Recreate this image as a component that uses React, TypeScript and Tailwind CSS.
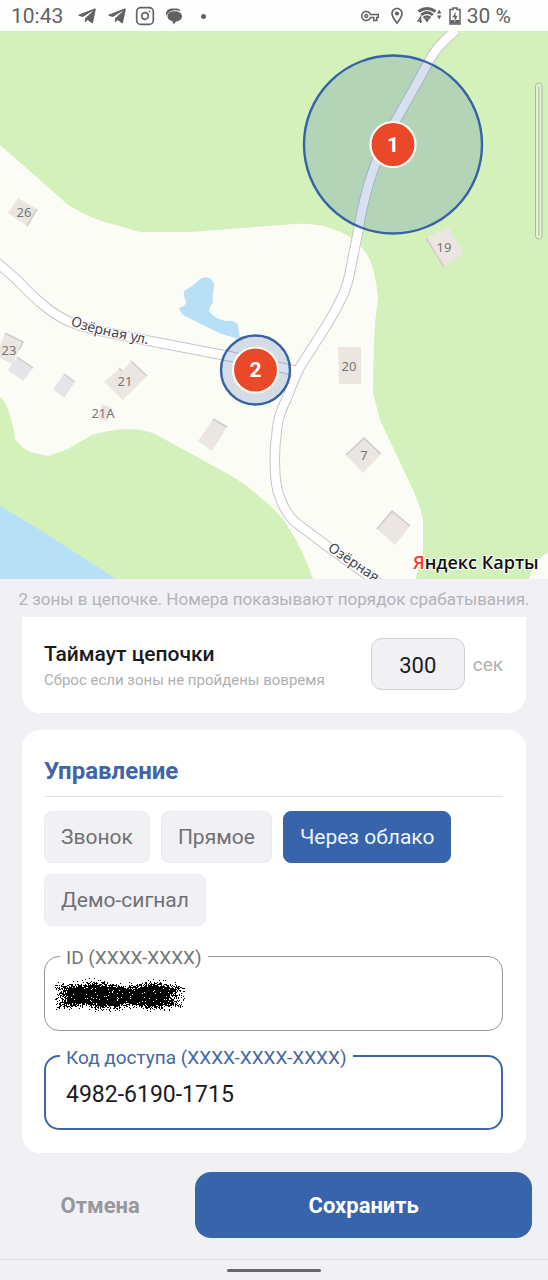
import { useState, type ReactNode } from "react";
import { Instagram } from "lucide-react";
import { FaTelegramPlane } from "react-icons/fa";
import { MdOutlineVpnKey, MdOutlineLocationOn } from "react-icons/md";

function StatusBar() {
  return (
    <header className="flex h-[31px] items-center justify-between bg-[#fefefe] pt-px pr-[37px] pl-[11px] text-[21px] leading-6 text-[#626262]">
      <div className="flex items-center">
        <span>10:43</span>
        <FaTelegramPlane className="ml-3.5 size-5" />
        <FaTelegramPlane className="ml-2.5 size-5" />
        <Instagram className="ml-2 size-5" strokeWidth={2} />
        <svg viewBox="0 0 18 18" className="ml-2.5 size-[18px]" fill="currentColor">
          <path d="M2.500 9.500C2.500 6 5.500 4.200 9.500 4.200C14 4.200 17 6.200 17 9.300C17 12.500 14 14.200 11.200 14.500L8.500 17.500L7.600 14.300C4.500 13.600 2.500 12 2.500 9.500Z" />
          <path d="M1.300 9C0 4.500 3 1.500 7 1.500H12C13.800 1.500 15 2.400 15.500 3.900C10 2.300 4 3 1.300 9Z" />
        </svg>
        <span className="ml-[18px] size-[5px] rounded-full bg-current" />
      </div>
      <div className="flex items-center">
        <MdOutlineVpnKey className="size-[18px]" />
        <MdOutlineLocationOn className="ml-2 size-5" />
        <svg viewBox="0 0 26 20" className="ml-2.5 h-5 w-[26px]" fill="none" stroke="currentColor">
          <path d="M1.500 5.500Q10 -0.500 18.500 5.500" strokeWidth="3" />
          <path d="M4.200 9Q10 4.200 15.800 9" strokeWidth="2.900" />
          <path d="M6.500 12Q10 8.800 13.500 12" strokeWidth="2.400" />
          <path d="M7.500 13Q10 11 12.500 13L10 16.500Z" fill="currentColor" stroke="none" />
          <path d="M3.600 17V11L1 15.200H5.200" strokeWidth="1.300" />
          <path d="M20 7.500L22.200 3.500L24.400 7.500ZM20 9.500L22.200 13.500L24.400 9.500Z" fill="currentColor" stroke="none" />
        </svg>
        <svg viewBox="0 0 12 18" className="ml-1.5 h-[18px] w-3" fill="none" stroke="currentColor">
          <path d="M4 1H8V2.500H11V17H1V2.500H4Z" strokeWidth="1.500" />
          <path d="M1.500 13H10.500V16.500H1.500Z" fill="currentColor" stroke="none" />
          <path d="M6.800 4.500L3 10.500H5.500V15L9 8.800H6.800Z" fill="currentColor" stroke="#fefefe" strokeWidth="0.400" />
        </svg>
        <span className="ml-1.5">30 %</span>
      </div>
    </header>
  );
}

const ROAD_MAIN =
  "M456 30Q438 46 434 53C428 62 422 74 417 83L396 120Q385 138 377 160Q370 178 367 190Q361 212 359 227L352 262Q348 285 343 295C337 308 333 315 328 323L300 367Q292 384 287 398Q278 415 277 430Q274 450 275 467Q275 485 280 498Q286 514 295 522L327 546L385 588";
const ROAD_SIDE = "M-4 262Q12 275 20 283Q34 298 47 308Q57 316 70 322Q84 328 110 333L150 341L233 357L297 371";

const BUILDINGS = [
  "18,198 37,209 27,226 8,213",
  "426,238 448,227 464,253 444,267",
  "5,333 23,342 12,364 -4,356",
  "131,361 147,376 123,400 104,382 120,368 123,371",
  "102,404 112,408 107,422 98,418",
  "213,419 227,427 212,451 198,441",
  "338,347 361,347 361,384 339,384",
  "364,438 381,454 363,473 346,455",
  "392,511 410,526 395,545 377,529",
];

const SHEDS = ["17,357 33,368 23,381 8,370", "64,374 75,382 64,398 53,389"];

const SHADES = [
  "M37 209L27 226",
  "M426 238L444 267",
  "M5 333L23 342L19 350",
  "M17 357L33 368",
  "M64 374L75 382",
  "M131 361L147 376M119 368L122 371",
  "M213 419L227 427",
  "M346 455L364 438L381 454",
  "M377 529L392 511L410 526",
];

const HOUSE_NUMBERS = [
  { x: 24, y: 217, label: "26" },
  { x: 444, y: 252, label: "19" },
  { x: 9, y: 355, label: "23" },
  { x: 125, y: 386, label: "21" },
  { x: 103, y: 418, label: "21А" },
  { x: 349, y: 371, label: "20" },
  { x: 364, y: 460, label: "7" },
];

const ZONES = [
  { x: 393, y: 144.5, r: 89, label: "1" },
  { x: 255.5, y: 370, r: 34.5, label: "2" },
];

function ZoneMap() {
  return (
    <svg viewBox="0 31 548 548" className="block w-full" role="img" aria-label="Карта зон">
      <defs>
        <path id="street-a" d="M70 325Q90 333 113 337L160 347" />
        <path id="street-b" d="M327 550L392 594" />
      </defs>
      <rect y="31" width="548" height="548" fill="#fcfcf6" />
      <path
        fill="#d4f1bb"
        d="M0 31H548V552Q534 560 529 579H416Q419 564 423 552V520Q420 505 413 490L380 420L373 393L374 340Q375 318 378 298Q376 276 370 260C362 244 350 236 341 232Q318 222 294 224L190 232H140L98 220Q80 213 67 204L0 145Z"
      />
      <path
        fill="#d4f1bb"
        d="M0 397Q5 401 7 407Q13 420 15 439Q22 448 30 452L48 456L68 449L92 435Q108 430 127 429Q143 429 155 434L230 475Q248 486 260 497Q282 515 288 527Q303 549 313 579H0Z"
      />
      <path fill="#b7dff5" d="M0 506L37 528L116 579H0Z" />
      <path
        fill="#b7dff5"
        d="M200 279Q205 276 209 278Q215 281 214 288Q212 296 213 302Q209 308 209 311Q215 319 226 321Q235 320 238 325L240 339Q225 336 213 330L187 317Q181 315 179 308Q186 306 186 302Q183 295 184 291Q195 285 200 279Z"
      />
      <g fill="none" stroke="#c6c6cb" strokeWidth="10.500">
        <path d={ROAD_MAIN} />
        <path d={ROAD_SIDE} />
      </g>
      <g fill="none" stroke="#ffffff" strokeWidth="8.500">
        <path d={ROAD_MAIN} />
        <path d={ROAD_SIDE} />
      </g>
      {BUILDINGS.map((points) => (
        <polygon key={points} points={points} fill="#ebe6e1" />
      ))}
      {SHEDS.map((points) => (
        <polygon key={points} points={points} fill="#e5e4e8" />
      ))}
      {SHADES.map((d) => (
        <path key={d} d={d} fill="none" stroke="#d0cbc8" strokeWidth="1.500" />
      ))}
      <g fill="#777777" fontFamily="'Noto Sans', sans-serif" fontSize="13" textAnchor="middle">
        {HOUSE_NUMBERS.map((n) => (
          <text key={n.label} x={n.x} y={n.y}>
            {n.label}
          </text>
        ))}
      </g>
      <g
        fill="#44444b"
        fontFamily="'Noto Sans', sans-serif"
        fontSize="14"
        stroke="#ffffff"
        strokeWidth="2"
        paintOrder="stroke"
      >
        <text>
          <textPath href="#street-a">Озёрная ул.</textPath>
        </text>
        <text>
          <textPath href="#street-b">Озёрная</textPath>
        </text>
      </g>
      {ZONES.map((z) => (
        <g key={z.label}>
          <circle cx={z.x} cy={z.y} r={z.r} fill="#3763ac" fillOpacity="0.2" stroke="#3763a6" strokeWidth="2.400" />
          <circle cx={z.x} cy={z.y} r="22.500" fill="#e94829" stroke="#fffaf0" strokeWidth="2.200" />
          <text
            x={z.x}
            y={z.y + 7}
            fill="#ffffff"
            fontFamily="'Roboto', sans-serif"
            fontSize="21"
            fontWeight="700"
            textAnchor="middle"
          >
            {z.label}
          </text>
        </g>
      ))}
      <rect x="535.500" y="83" width="6.500" height="156" rx="3.200" fill="#e3f3d5" stroke="#a9bb9b" />
      <rect x="538" y="86" width="1.500" height="150" rx="0.700" fill="#b8caa9" />
      <text
        x="413"
        y="569"
        fill="#111111"
        fontFamily="'Open Sans', sans-serif"
        fontSize="18"
        fontWeight="600"
        stroke="#ffffff"
        strokeWidth="2"
        paintOrder="stroke"
      >
        <tspan fill="#f33b2f">Я</tspan>ндекс Карты
      </text>
    </svg>
  );
}

/* Speckled ink over a hidden value; the seed keeps it the same on each render. */
function inkPath() {
  let seed = 20417;
  const next = () => {
    seed = (seed * 1103515245 + 12345) % 2147483648;
    return seed / 2147483648;
  };
  let d = "";
  for (let y = 0; y < 34; y++) {
    for (let x = 0; x < 130; x++) {
      const top = 7 + 2 * Math.sin(x / 9) + (x < 40 ? -1 : 0);
      const bottom = 28 + 1.5 * Math.cos(x / 8);
      const edge = Math.min((x - 1) / 2.6, (126 - x) / 2.6, y - top + 2, bottom - y + 2);
      const chance = edge < -3 ? 0 : edge < 0 ? 0.08 : Math.min(0.96, 0.2 + edge * 0.15);
      if (next() < chance) d += `M${x} ${y}h1v1h-1z`;
    }
  }
  return d;
}
const INK = inkPath();

type FieldProps = {
  id: string;
  label: string;
  value: string;
  onChange: (value: string) => void;
  active?: boolean;
  children?: ReactNode;
};

function OutlinedField({ id, label, value, onChange, active = false, children }: FieldProps) {
  return (
    <fieldset
      className={
        active
          ? "relative min-w-0 rounded-[15px] border-2 border-[#3f65a8] px-3.5 pb-3 text-[#4468a6]"
          : "relative min-w-0 rounded-[15px] border border-[#949494] px-[15px] pb-3.5 text-[#757575]"
      }
    >
      <legend className="px-1.5 pt-1 text-[19px] leading-5">
        <label htmlFor={id}>{label}</label>
      </legend>
      <input
        id={id}
        value={value}
        onChange={(e) => onChange(e.target.value)}
        className="block h-12 w-full bg-transparent px-1.5 pt-1 text-[23px] text-[#1b1b1d] outline-none"
      />
      {children}
    </fieldset>
  );
}

const MODES = ["Звонок", "Прямое", "Через облако", "Демо-сигнал"];

export default function App() {
  const [timeout, setTimeoutValue] = useState("300");
  const [mode, setMode] = useState("Через облако");
  const [deviceId, setDeviceId] = useState("");
  const [code, setCode] = useState("4982-6190-1715");

  return (
    <div className="flex min-h-screen flex-col bg-[#f1f0f5] font-['Roboto',sans-serif]">
      <StatusBar />
      <ZoneMap />
      <p className="pt-[9px] pb-[7px] text-center text-[17px] leading-[22px] whitespace-nowrap text-[#b3b3b7]">
        2 зоны в цепочке. Номера показывают порядок срабатывания.
      </p>

      <main className="flex flex-col gap-[17px] px-[22px]">
        <section className="flex items-center justify-between rounded-b-[18px] bg-white pt-[21px] pr-[23px] pb-[23px] pl-[22px]">
          <div className="pt-0.5">
            <label htmlFor="timeout" className="block text-[21px] leading-7 font-medium text-[#1b1b1d]">
              Таймаут цепочки
            </label>
            <p className="mt-0.5 text-[15px] leading-5 text-[#b0b0b0]">Сброс если зоны не пройдены вовремя</p>
          </div>
          <div className="flex items-center gap-2">
            <input
              id="timeout"
              value={timeout}
              onChange={(e) => setTimeoutValue(e.target.value)}
              className="h-[52px] w-[94px] rounded-[11px] border border-[#d0d0d3] bg-[#f1f0f5] pt-0.5 text-center text-[22px] text-[#1b1b1d] outline-none"
            />
            <span className="pt-0.5 text-[19px] text-[#b0b0b0]">сек</span>
          </div>
        </section>

        <section className="rounded-[18px] bg-white pt-[27px] pr-[23px] pb-[23px] pl-[22px]">
          <h2 className="border-b border-[#e2e2e4] pb-[11px] text-2xl leading-7 font-bold text-[#3f65a8]">
            Управление
          </h2>
          <div className="mt-3.5 flex flex-wrap gap-[11px]">
            {MODES.map((name) => (
              <button
                key={name}
                type="button"
                aria-pressed={mode === name}
                onClick={() => setMode(name)}
                className={
                  mode === name
                    ? "h-[52px] rounded-lg border border-[#3864ac] bg-[#3864ac] px-4 pt-0.5 text-[21px] text-[#eef4ff]"
                    : "h-[52px] rounded-lg border border-[#ebebee] bg-[#f1f0f5] px-4 pt-0.5 text-[21px] text-[#707073]"
                }
              >
                {name}
              </button>
            ))}
          </div>
          <div className="mt-[18px] flex flex-col gap-[13px]">
            <OutlinedField id="device" label="ID (XXXX-XXXX)" value={deviceId} onChange={setDeviceId}>
              <svg
                viewBox="0 0 130 34"
                className="pointer-events-none absolute top-2.5 left-2.5 h-[34px] w-[130px]"
                shapeRendering="crispEdges"
                aria-hidden="true"
              >
                <path d={INK} fill="#000000" />
              </svg>
            </OutlinedField>
            <OutlinedField id="code" label="Код доступа (XXXX-XXXX-XXXX)" value={code} onChange={setCode} active />
          </div>
        </section>
      </main>

      <footer className="mt-auto">
        <div className="flex items-center gap-[11px] px-4 pt-[19px] pb-[21px]">
          <button type="button" className="h-[66px] flex-1 rounded-2xl text-[22px] font-bold text-[#98989c]">
            Отмена
          </button>
          <button type="button" className="h-[66px] flex-2 rounded-2xl bg-[#3864ac] text-[22px] font-bold text-white">
            Сохранить
          </button>
        </div>
        <div className="flex h-[21px] items-center justify-center border-t border-[#d9d9de]">
          <span className="h-[3px] w-[94px] rounded-full bg-[#67676b]" />
        </div>
      </footer>
    </div>
  );
}
